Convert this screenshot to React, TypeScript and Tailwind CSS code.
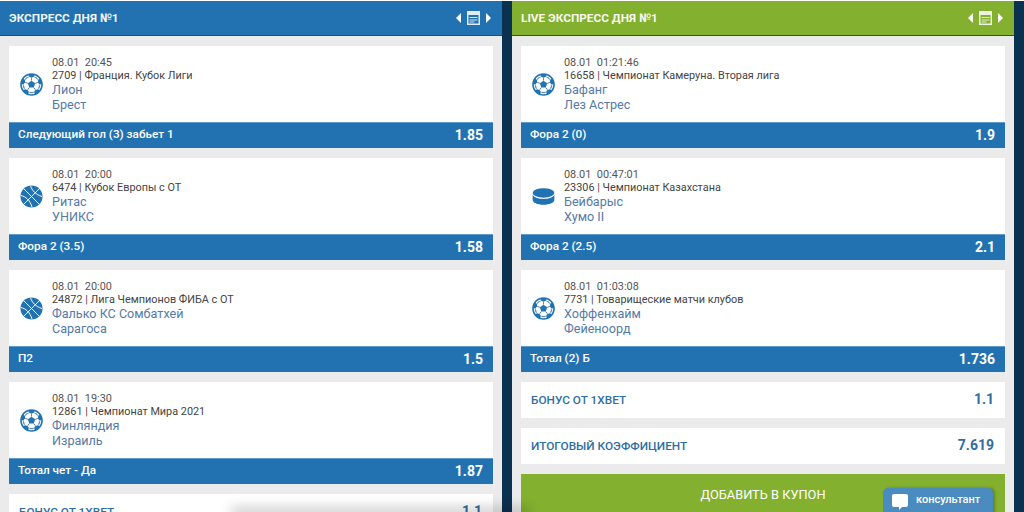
import React from 'react';

type Sport = 'soccer' | 'basket' | 'hockey';

type Match = {
  date: string;
  league: string;
  home: string;
  away: string;
  sport: Sport;
  bet: string;
  odd: string;
};

const dayMatches: Match[] = [
  { date: '08.01  20:45', league: '2709 | Франция. Кубок Лиги', home: 'Лион', away: 'Брест', sport: 'soccer', bet: 'Следующий гол (3) забьет 1', odd: '1.85' },
  { date: '08.01  20:00', league: '6474 | Кубок Европы с ОТ', home: 'Ритас', away: 'УНИКС', sport: 'basket', bet: 'Фора 2 (3.5)', odd: '1.58' },
  { date: '08.01  20:00', league: '24872 | Лига Чемпионов ФИБА с ОТ', home: 'Фалько КС Сомбатхей', away: 'Сарагоса', sport: 'basket', bet: 'П2', odd: '1.5' },
  { date: '08.01  19:30', league: '12861 | Чемпионат Мира 2021', home: 'Финляндия', away: 'Израиль', sport: 'soccer', bet: 'Тотал чет - Да', odd: '1.87' },
];

const liveMatches: Match[] = [
  { date: '08.01  01:21:46', league: '16658 | Чемпионат Камеруна. Вторая лига', home: 'Бафанг', away: 'Лез Астрес', sport: 'soccer', bet: 'Фора 2 (0)', odd: '1.9' },
  { date: '08.01  00:47:01', league: '23306 | Чемпионат Казахстана', home: 'Бейбарыс', away: 'Хумо II', sport: 'hockey', bet: 'Фора 2 (2.5)', odd: '2.1' },
  { date: '08.01  01:03:08', league: '7731 | Товарищеские матчи клубов', home: 'Хоффенхайм', away: 'Фейеноорд', sport: 'soccer', bet: 'Тотал (2) Б', odd: '1.736' },
];

function SportIcon({ sport }: { sport: Sport }) {
  if (sport === 'soccer') {
    return (
      <svg viewBox="0 0 24 24" className="w-[23px] h-[23px]">
        <circle cx="12" cy="12" r="11" fill="#fff" stroke="#2272b2" strokeWidth="1.6" />
        <path d="M12 8l3.8 2.8-1.45 4.4h-4.7L8.2 10.8z" fill="#2272b2" />
        {[0, 72, 144, 216, 288].map((a) => (
          <g key={a} transform={`rotate(${a} 12 12)`}>
            <path d="M8.4 1.2h7.2L14.4 4 12 5 9.6 4z" fill="#2272b2" />
            <path d="M12 5v3" stroke="#2272b2" strokeWidth="0.8" />
            <path d="M14.4 4l4 1.8M9.6 4L5.6 5.8" stroke="#2272b2" strokeWidth="0.6" />
          </g>
        ))}
      </svg>
    );
  }
  if (sport === 'basket') {
    return (
      <svg viewBox="0 0 24 24" className="w-[23px] h-[23px]">
        <circle cx="12" cy="12" r="11.5" fill="#2272b2" />
        <g fill="none" stroke="#fff" strokeWidth="1">
          <path d="M4 4l16 16" />
          <path d="M20.5 3.5L3.5 20.5" />
          <path d="M11 .8C12.5 5.5 16 10 23 12" />
          <path d="M.8 11C6 11.8 11 16.5 12.5 23.2" />
        </g>
      </svg>
    );
  }
  return (
    <svg viewBox="0 0 24 18" className="w-[23px] h-[17px]">
      <ellipse cx="12" cy="5.2" rx="11.5" ry="5" fill="#2272b2" />
      <path d="M.5 7.2c1.5 3 6 4.4 11.5 4.4s10-1.4 11.5-4.4v5.6c0 2.8-5 5-11.5 5S.5 15.6.5 12.8z" fill="#2272b2" />
    </svg>
  );
}

function PanelHeader({ title, color, pane }: { title: string; color: string; pane: string }) {
  return (
    <div className={`h-[35px] shrink-0 flex items-center justify-between pl-[9px] pr-[11px] border-b border-[#17527f] ${color}`}>
      <span className="text-[11.8px] font-bold text-white/95 pt-[2px]">{title}</span>
      <div className="flex items-center gap-[6px]">
        <span className="w-0 h-0 border-y-[5px] border-y-transparent border-r-[5px] border-r-white" />
        <svg viewBox="0 0 13 14" className="w-[13px] h-[14px]">
          <rect width="13" height="14" fill="#fff" opacity="0.85" />
          <rect x="1.5" y="4" width="10" height="8.5" fill={pane} />
          <rect x="2.5" y="6" width="8" height="1" fill="#fff" opacity="0.8" />
          <rect x="2.5" y="8.5" width="8" height="1" fill="#fff" opacity="0.8" />
          <rect x="2.5" y="10.5" width="5" height="1" fill="#fff" opacity="0.8" />
        </svg>
        <span className="w-0 h-0 border-y-[5px] border-y-transparent border-l-[5px] border-l-white" />
      </div>
    </div>
  );
}

function MatchCard({ match }: { match: Match }) {
  return (
    <div className="shrink-0 bg-white">
      <div className="h-[76px] flex items-center">
        <div className="w-[43px] shrink-0 flex justify-center pl-[1px]">
          <SportIcon sport={match.sport} />
        </div>
        <div className="min-w-0">
          <div className="text-[10.9px] leading-[13px] text-[#555] whitespace-pre">{match.date}</div>
          <div className="text-[10.85px] leading-[13px] text-[#444]">{match.league}</div>
          <div className="text-[12.6px] leading-[15px] text-[#557aa8]">{match.home}</div>
          <div className="text-[12.6px] leading-[15px] text-[#557aa8]">{match.away}</div>
        </div>
      </div>
      <div className="h-[26px] bg-[#2272b2] flex items-center justify-between pl-[9px] pr-[10px] text-white border-t border-[#5c9acb]">
        <span className="text-[11.75px] font-medium pb-[2px]">{match.bet}</span>
        <span className="text-[14px] font-bold">{match.odd}</span>
      </div>
    </div>
  );
}

function TotalRow({ label, value }: { label: string; value: string }) {
  return (
    <div className="h-[36px] shrink-0 bg-white flex items-center justify-between pl-[10px] pr-[11px] text-[#2f6ea5]">
      <span className="text-[11.8px] font-medium pt-px">{label}</span>
      <span className="text-[14px] font-bold pb-px">{value}</span>
    </div>
  );
}

export default function App() {
  return (
    <div className="relative h-[512px] w-[1024px] overflow-hidden bg-[#0b3151] font-['Roboto',sans-serif]">
      <div className="h-px bg-white" />
      <div className="flex h-[511px]">
        {/* day express */}
        <div className="w-[502px] shrink-0 flex flex-col bg-[#ebebeb]">
          <PanelHeader title="ЭКСПРЕСС ДНЯ №1" color="bg-[#2272b2]" pane="#2272b2" />
          <div className="flex flex-col gap-[10px] pt-[10px] pl-[9px] pr-[9px]">
            {dayMatches.map((m) => (
              <MatchCard key={m.league} match={m} />
            ))}
            <TotalRow label="БОНУС ОТ 1ХВЕТ" value="1.1" />
          </div>
        </div>

        <div className="w-[10px] shrink-0" />

        {/* live express */}
        <div className="w-[502px] shrink-0 flex flex-col bg-[#ebebeb]">
          <PanelHeader title="LIVE ЭКСПРЕСС ДНЯ №1" color="bg-[#84b02f]" pane="#84b02f" />
          <div className="flex flex-col gap-[10px] pt-[10px] pl-[9px] pr-[9px]">
            {liveMatches.map((m) => (
              <MatchCard key={m.league} match={m} />
            ))}
            <TotalRow label="БОНУС ОТ 1ХВЕТ" value="1.1" />
            <TotalRow label="ИТОГОВЫЙ КОЭФФИЦИЕНТ" value="7.619" />
            <div className="h-[44px] shrink-0 bg-[#84b02f] flex items-center justify-center text-[12.8px] font-normal text-white pb-[3px]">
              ДОБАВИТЬ В КУПОН
            </div>
          </div>
        </div>
      </div>

      {/* consultant tab */}
      <div className="absolute left-[883px] top-[488px] w-[110px] h-[30px] rounded-t-[5px] bg-[#4a8bc0] flex items-start pl-[9px] pt-[6px] gap-[8px] text-white shadow-[2px_0_3px_rgba(0,0,0,0.25)]">
        <svg viewBox="0 0 16 16" className="w-[16px] h-[16px] shrink-0">
          <path d="M2 0h12a2 2 0 0 1 2 2v9a2 2 0 0 1-2 2h-4l-3 3v-3H2a2 2 0 0 1-2-2V2a2 2 0 0 1 2-2z" fill="#fff" />
        </svg>
        <span className="text-[11px] leading-[12px] font-medium">консультант</span>
      </div>

      {/* shadow at the bottom edge */}
      <div className="absolute left-[230px] top-[507px] w-[300px] h-[10px] rounded-full bg-black/20 blur-[6px]" />
    </div>
  );
}
